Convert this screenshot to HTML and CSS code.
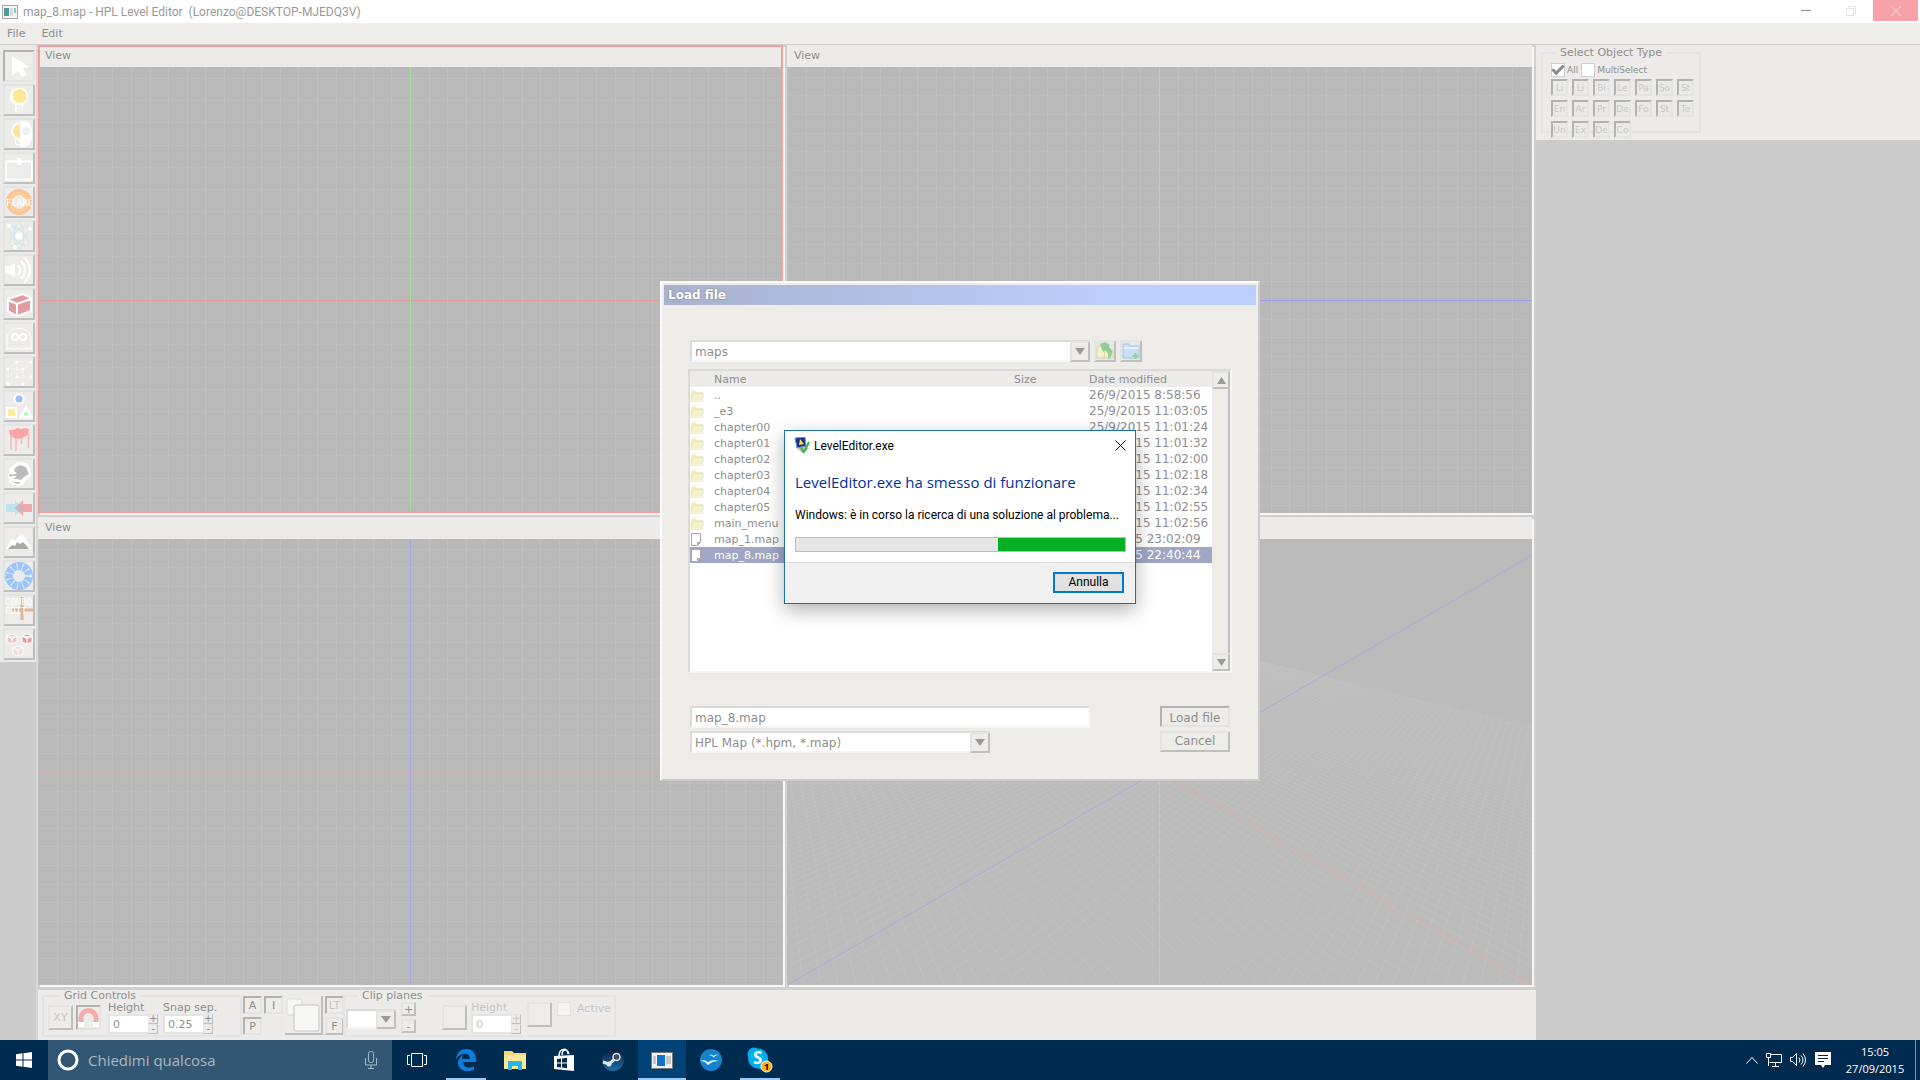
FILE: index.html
```html
<!DOCTYPE html>
<html lang="it">
<head>
<meta charset="utf-8">
<title>map_8.map - HPL Level Editor</title>
<link rel="stylesheet" href="styles.css">
</head>
<body>
<header class="titlebar">
  <svg class="app-icon" width="16" height="14" viewBox="0 0 16 14"><rect x=".5" y=".5" width="15" height="13" fill="#f4f4f4" stroke="#a9a9a9"/><rect x="2" y="3" width="5" height="8" fill="#4f9a95"/><path d="M2 3h3l-3 5z" fill="#5f8fc0"/><rect x="8" y="3" width="3" height="8" fill="#d9dbe6"/><rect x="12" y="3" width="2" height="5" fill="#8ccfae"/></svg>
  <span class="title">map_8.map - HPL Level Editor&nbsp; (Lorenzo@DESKTOP-MJEDQ3V)</span>
  <div class="window-buttons">
    <button aria-label="Riduci a icona"><svg width="10" height="10"><path d="M0 4.500h10" stroke="#8a8a8a"/></svg></button>
    <button aria-label="Ingrandisci"><svg width="10" height="10" fill="none" stroke="#e2e2e2"><path d="M.5 2.500h7v7h-7zM2.500 2.500v-2h7v7h-2"/></svg></button>
    <button class="close" aria-label="Chiudi"><svg width="10" height="10"><path d="M0 0l10 10M10 0L0 10" stroke="#fcdcde"/></svg></button>
  </div>
</header>
<nav class="menubar"><button>File</button><button>Edit</button></nav>

<main class="editor">
  <aside class="toolbar">
    <div class="tools">
      <button class="sunken" aria-label="Select"><svg viewBox="0 0 28 28"><path d="M7 4v20l6-5 4 6 5-2-4-7 6-1z" fill="#fff"/></svg></button>
      <button aria-label="Light"><svg viewBox="0 0 28 28"><path d="M14 1.500a9 9 0 0 0-5 16.500l1 2v5q4 3 8 0v-5l1-2a9 9 0 0 0-5-16.500" fill="#fff"/><circle cx="14.500" cy="10" r="7" fill="#ffe694"/><path d="M12 20l5 5m-5-2l3 3m-1-7l3 3" stroke="#ddd"/></svg></button>
      <button aria-label="Billboard light"><svg viewBox="0 0 28 28"><path d="M14 2a9 9 0 0 0-4 16v6q2 2 5 1z" fill="#fff"/><path d="M15 4a7 7 0 0 0 0 14z" fill="#ffe694"/><path d="M15 1h5c10 1 10 26-1 26h-4z" fill="#fff"/><circle cx="21" cy="11" r="4" fill="#f0f0ee"/><path d="M11 20l3 4" stroke="#ccc"/></svg></button>
      <button aria-label="Area"><svg viewBox="0 0 28 28"><path d="M1 7.500h26v18H1z" fill="none" stroke="#fff" stroke-width="2"/><path d="M12 4h4v7h-4z" fill="#fff"/></svg></button>
      <button aria-label="Flare"><svg viewBox="0 0 28 28"><circle cx="14" cy="14" r="10" fill="none" stroke="#fbc396" stroke-width="6"/><circle cx="14" cy="14" r="9" fill="none" stroke="#fdd09a" stroke-width="2"/><text x="1" y="18" class="icon-text" font-size="9">FLARE</text></svg></button>
      <button aria-label="Particle"><svg viewBox="0 0 28 28" fill="none" stroke="#cfe8ee"><ellipse cx="14" cy="14" rx="5" ry="13"/><ellipse cx="14" cy="14" rx="5" ry="13" transform="rotate(45 14 14)"/><ellipse cx="14" cy="14" rx="5" ry="13" transform="rotate(-45 14 14)"/><g fill="#fff" stroke="none"><circle cx="14" cy="14" r="3.500"/><circle cx="4" cy="4" r="2"/><circle cx="25" cy="7" r="2"/><circle cx="10" cy="25" r="2"/></g></svg></button>
      <button aria-label="Sound"><svg viewBox="0 0 28 28" fill="none" stroke="#fff" stroke-width="2"><path d="M0 10h5l5-3v14l-5-3H0z" fill="#fff" stroke="none"/><path d="M13 9q4 5 0 10M16 5q8 9 0 18M19 1q12 13 0 26"/></svg></button>
      <button aria-label="Static object"><svg viewBox="0 0 28 28"><path d="M3 9L18 4l8 4v13l-14 5-9-5z" fill="#e29ca0" stroke="#fff" stroke-width="2"/><path d="M3 10l9 4 14-5M12 14v12" stroke="#fff" stroke-width="2" fill="none"/></svg></button>
      <button aria-label="Entity"><svg viewBox="0 0 28 28" fill="none" stroke="#fff"><path d="M2 26V15c0-14 24-14 24 0v11q-2-4-4 0-2-4-4 0-2-4-4 0-2-4-4 0-2-4-4 0-2-4-4 0z"/><g stroke-width="2"><circle cx="10" cy="13" r="3"/><circle cx="18" cy="13" r="3"/></g></svg></button>
      <button aria-label="Area box"><svg viewBox="0 0 28 28" fill="none" stroke="#fff"><path d="M3 11h15v16H3zM12 4h15v15H12zM3 11l9-7M18 11l9-7M3 27l9-8M18 27l9-8" stroke-dasharray="1 2"/><g fill="#fff" stroke="none"><circle cx="3" cy="11" r="1.500"/><circle cx="18" cy="11" r="1.500"/><circle cx="12" cy="4" r="1.500"/><circle cx="26" cy="4" r="1.500"/><circle cx="3" cy="26" r="1.500"/><circle cx="18" cy="26" r="1.500"/><circle cx="12" cy="19" r="1.500"/><circle cx="26" cy="19" r="1.500"/></g></svg></button>
      <button aria-label="Primitive"><svg viewBox="0 0 28 28" stroke="#fff" stroke-width="2"><circle cx="14" cy="7" r="4.500" fill="#9cc0fa"/><path d="M2 16h9v9H2z" fill="#ffec9c"/><path d="M21 16l5 9H16z" fill="#9f9" stroke-width="3"/></svg></button>
      <button aria-label="Decal"><svg viewBox="0 0 28 28"><path d="M4 4l5 0 3-2 4 1 4-1 4 1-1 6-4 2-5 2-5-1-4-3z" fill="#fba6a6"/><path d="M6 10v14M11 12v13M16.500 12v6M23.500 8v14" stroke="#f6b8b8" stroke-width="1.500"/></svg></button>
      <button aria-label="Fog"><svg viewBox="0 0 28 28"><path d="M9 5l4-3 8 1 4 5 1 8-5 4-3 5-6 1-7-3-2-8 2-3-1-3z" fill="#fff"/><path d="M10 8l5-3 6 2 3 7-5 3-3 3-4-1-4 0 4-3-5 0 5-3-3-2zM5 19l4 3 6 0-1 2-5-1z" fill="#bcbcbc"/><path d="M4 14l6 1-5 2z" fill="#bcbcbc"/></svg></button>
      <button aria-label="Mirror"><svg viewBox="0 0 28 28"><path d="M1 10h9V6l8 8-8 8v-4H1z" fill="#c0e4ee"/><path d="M27 10h-9V6l-8 8 8 8v-4h9z" fill="#eea8ac"/><path d="M14 10l4 4-4 4-4-4z" fill="#c5b9c4"/></svg></button>
      <button aria-label="Terrain"><svg viewBox="0 0 28 28"><path d="M1 21l6-10 3 2 7-8 10 16z" fill="#fff"/><path d="M3 21l4-4 3 1 2-4 3 2 3-2 3 3 3 4z" fill="#aaa"/></svg></button>
      <button aria-label="Rotate"><svg viewBox="0 0 28 28"><circle cx="14" cy="14" r="10" fill="none" stroke="#9cc3fb" stroke-width="8"/><circle cx="14" cy="14" r="9" fill="none" stroke="#dfeaf6" stroke-width="8" stroke-dasharray="1 4"/></svg></button>
      <button aria-label="Combo edit"><svg viewBox="0 0 28 28"><path d="M17 1v23M6 14h22" stroke="#dbb497" stroke-width="3"/><text x="0" y="9" class="icon-text" font-size="9">COMBO</text><text x="0" y="18" class="icon-text" font-size="9">EDIT</text></svg></button>
      <button aria-label="Groups"><svg viewBox="0 0 28 28" stroke="#fff"><path d="M2 6l5-2 5 2v6l-5 2-5-2zM2 6l5 3 5-3M7 9v5" fill="#efc4c8"/><path d="M17 6l5-2 5 2v6l-5 2-5-2zM17 6l5 3 5-3M22 9v5" fill="#e29ca0"/><path d="M8 18l5-2 5 2v6l-5 2-5-2zM8 18l5 3 5-3M13 21v5" fill="#f1dcdd"/></svg></button>
    </div>
  </aside>

  <div class="center">
    <div class="views">
      <section class="view active"><h2>View</h2><svg data-view="flat" data-stepy="22.2" data-h="#e09a9a" data-v="#9fe398"></svg></section>
      <section class="view"><h2>View</h2><svg data-view="flat" data-stepy="18.6" data-h="#9c9cf5" data-v="#9fe398"></svg></section>
      <section class="view"><h2>View</h2><svg data-view="flat" data-stepy="18.6" data-h="#ceaeae" data-v="#a6a6ea"></svg></section>
      <section class="view scene"><h2>View</h2><svg data-view="perspective"></svg></section>
    </div>
    <div class="controls">
      <fieldset class="grid-controls"><legend>Grid Controls</legend>
        <button class="tile off">XY</button>
        <button class="tile sunken" aria-label="Snap"><svg width="21" height="21" viewBox="0 0 21 21"><path d="M3 18v-7a7 7 0 0 1 15 0v7" fill="none" stroke="#f4adad" stroke-width="5"/><path d="M0 15h6v5H0zM15 15h6v5h-6z" fill="#fff"/></svg></button>
        <div class="field"><label for="gh">Height</label><div class="spin"><input id="gh" value="0"><span><button>+</button><button>-</button></span></div></div>
        <div class="field snap"><label for="gs">Snap sep.</label><div class="spin"><input id="gs" value="0.25"><span><button>+</button><button>-</button></span></div></div>
      </fieldset>
      <div class="modes">
        <button class="sunken">A</button><button class="sunken">I</button>
        <button class="layers" aria-label="Layers"><svg width="36" height="36" viewBox="0 0 36 36"><g fill="#f6f6f5" stroke="#dadada"><rect x="2" y="2" width="15" height="16" rx="1"/><rect x="9" y="8" width="25" height="26" rx="2" stroke="#c6c6c6"/></g></svg></button>
        <button class="sunken off">LT</button>
        <button class="sunken second">P</button><button>F</button>
      </div>
      <fieldset class="clip"><legend>Clip planes</legend>
        <div class="select-box mini"><input aria-label="Clip plane"><button aria-label="Open"><svg width="10" height="7"><path d="M0 0h10L5 7z" fill="#999"/></svg></button></div>
        <div class="plusminus"><button>+</button><button>-</button></div>
        <button class="tile plane" aria-label="Plane"></button>
        <div class="field off"><label for="ch">Height</label><div class="spin"><input id="ch" value="0"><span><button>+</button><button>-</button></span></div></div>
        <button class="tile flip" aria-label="Flip"></button>
        <label class="check off"><input type="checkbox">Active</label>
      </fieldset>
    </div>
  </div>

  <aside class="side">
    <div class="side-panel">
      <fieldset><legend>Select Object Type</legend>
        <div class="checks"><label class="check"><input type="checkbox" checked>All</label><label class="check multi"><input type="checkbox">MultiSelect</label></div>
        <div class="types"><button>Li</button><button>Li</button><button>Bi</button><button>Le</button><button>Pa</button><button>So</button><button>St</button><button>En</button><button>Ar</button><button>Pr</button><button>De</button><button>Fo</button><button>St</button><button>Te</button><button>Un</button><button>Ex</button><button>De</button><button>Co</button></div>
      </fieldset>
    </div>
  </aside>
</main>

<section class="load-dialog" role="dialog" aria-label="Load file">
  <h2>Load file</h2>
  <div class="load-body">
    <div class="path-row">
      <div class="select-box path"><input aria-label="Folder" value="maps"><button aria-label="Open"><svg width="10" height="7"><path d="M0 0h10L5 7z" fill="#999"/></svg></button></div>
      <button class="icon-button" aria-label="Up"><svg width="18" height="18" viewBox="0 0 18 18"><path d="M1 4h4l1 1h3v11H1z" fill="#f5f0cb" stroke="#d8d2a4"/><path d="M9 8h8v8H8z" fill="#f5f0cb" stroke="#d8d2a4"/><path d="M4 2l5-2 5 3-1 2q5 4 2 10l-3 2q1-6-3-9L7 10z" fill="#8fce96"/></svg></button>
      <button class="icon-button" aria-label="New folder"><svg width="18" height="18" viewBox="0 0 18 18"><path d="M1 2h6l1 2h9v12H1z" fill="#c9dff5" stroke="#a8c4e4"/><path d="M2 6h15" stroke="#fff"/><path d="M13.500 11v6M10.500 14h6" stroke="#96d09b" stroke-width="2"/></svg></button>
    </div>
    <div class="list">
      <table>
        <colgroup><col class="c-icon"><col class="c-name"><col class="c-size"><col></colgroup>
        <thead><tr><th></th><th>Name</th><th>Size</th><th>Date modified</th></tr></thead>
        <tbody id="files"></tbody>
      </table>
      <div class="scrollbar"><button aria-label="Scroll up"><svg width="9" height="7"><path d="M0 7h9L4.500 0z" fill="#999"/></svg></button><button aria-label="Scroll down"><svg width="9" height="7"><path d="M0 0h9L4.500 7z" fill="#999"/></svg></button></div>
    </div>
    <div class="bottom-row">
      <div class="inputs">
        <input class="file-name" aria-label="File name" value="map_8.map">
        <div class="select-box filter"><input aria-label="File type" value="HPL Map (*.hpm, *.map)"><button aria-label="Open"><svg width="10" height="7"><path d="M0 0h10L5 7z" fill="#999"/></svg></button></div>
      </div>
      <div class="actions"><button class="sunken">Load file</button><button>Cancel</button></div>
    </div>
  </div>
</section>

<section class="crash" role="dialog" aria-label="LevelEditor.exe">
  <div class="crash-title"><svg width="16" height="17" viewBox="0 0 16 17"><path d="M3 11l8-2 4 3-7 4z" fill="#b9c0c6"/><path d="M1 1l10-1 1 9-9 2z" fill="#15309c" stroke="#8593b5"/><path d="M6 2l4 5-5 1z" fill="#f6e32c"/><path d="M7 11l3 4 5-10" fill="none" stroke="#3fb441" stroke-width="2"/></svg><span>LevelEditor.exe</span><button aria-label="Chiudi"><svg width="11" height="11"><path d="M.5 .5l10 10M10.500 .5l-10 10" stroke="#000"/></svg></button></div>
  <h3>LevelEditor.exe ha smesso di funzionare</h3>
  <p>Windows: è in corso la ricerca di una soluzione al problema...</p>
  <div class="progress"><div></div></div>
  <footer><button>Annulla</button></footer>
</section>

<footer class="taskbar">
  <button class="start" aria-label="Start"><svg width="16" height="16" viewBox="0 0 16 16" fill="#fff"><path d="M0 2.200L6.500 1.300v6.200H0zM7.500 1.200L16 0v7.500H7.500zM0 8.500h6.500v6.200L0 13.800zM7.500 8.500H16V16l-8.500-1.200z"/></svg></button>
  <div class="search"><svg width="22" height="22"><circle cx="11" cy="11" r="9" fill="none" stroke="#fff" stroke-width="3"/></svg><input aria-label="Cerca" placeholder="Chiedimi qualcosa"><svg width="12" height="18" fill="none" stroke="#a9b8c5"><rect x="3.500" y=".5" width="5" height="11" rx="2"/><path d="M.5 7v7h11V7M6 14v3M3 17.500h6"/></svg></div>
  <div class="apps">
    <button aria-label="Visualizzazione attività"><svg width="20" height="14" fill="none" stroke="#fff"><path d="M4.500 .5h11v13h-11zM3 2.500H.5v9H3M17 2.500h2.500v9H17"/></svg></button>
    <button class="running" aria-label="Edge"><svg width="20" height="22" viewBox="0 0 20 22"><path d="M0 10C1 3 5 0 10.500 0 17 0 20 5 20 10v3H7c0 6 7 7 11 4v4C10 24 2 21 2 14c0-4 3-7 6-8-2 1-2 3-2 4h8c0-7-9-7-14 0" fill="#0c7fdd"/></svg></button>
    <button aria-label="Esplora file"><svg width="22" height="19" viewBox="0 0 22 19"><path d="M0 0h8l2 2h12v16H0z" fill="#f7d76f"/><path d="M0 4h22v14H0z" fill="#fde79a"/><path d="M4 19v-9h14v9h-4v-4H8v4z" fill="#28b7e5"/></svg></button>
    <button aria-label="Store"><svg width="22" height="24" viewBox="0 0 22 24"><path d="M1 8l20-1v16L1 21z" fill="#fff"/><path d="M6 8c0-8 9-9 9-2M9 7c0-6 5-7 7-1" fill="none" stroke="#fff" stroke-width="1.500"/><path d="M4 11l4-.5v4H4zM9 10.400l5-.6v4.700H9zM4 15.500h4v4l-4-.5zM9 15.500h5v4.700l-5-.6z" fill="#002b50"/></svg></button>
    <button aria-label="Steam"><svg width="22" height="22" viewBox="0 0 22 22"><defs><linearGradient id="st" x1="0" y1="0" x2="0" y2="1"><stop offset="0" stop-color="#0d1b3c"/><stop offset="1" stop-color="#1a70a5"/></linearGradient></defs><circle cx="11" cy="11" r="11" fill="url(#st)"/><path d="M1 13l6 2 7-6" stroke="#dfe5ea" stroke-width="3" fill="none"/><circle cx="14.500" cy="8" r="3.500" fill="#3b4a63" stroke="#dfe5ea" stroke-width="1.500"/><circle cx="7" cy="15" r="2.500" fill="#dfe5ea"/></svg></button>
    <button class="running current" aria-label="HPL Level Editor"><svg width="22" height="17" viewBox="0 0 22 17"><path d="M.5 .5h21v16H.5z" fill="#f4f4f4" stroke="#7b7b7b"/><path d="M6 3h8v11H6z" fill="#1172d3"/><path d="M2 5h3M2 7h3M2 9h3M2 11h3M15 5h5M15 7h5M15 9h5M15 11h5" stroke="#999"/></svg></button>
    <button aria-label="OpenOffice"><svg width="22" height="22" viewBox="0 0 22 22"><circle cx="11" cy="11" r="11" fill="#1484cf"/><path d="M9 6q3-1 4.500 1 2-2 5-1-3.500 0-4.500 2.500-2-2.500-5-2.500M0 12q5-2 8 1.500 4-3.500 11-1.500-7 0-11 4-3-4-8-4z" fill="#fff"/></svg></button>
    <button class="running" aria-label="Skype"><svg width="26" height="26" viewBox="0 0 26 26"><circle cx="7" cy="7" r="6.500" fill="#00aff0"/><circle cx="15" cy="16" r="6.500" fill="#00aff0"/><circle cx="11" cy="11.500" r="10" fill="#00aff0"/><text x="6" y="17" font-size="17" class="skype">S</text><circle cx="19.500" cy="19.500" r="5.500" fill="#fdb01c" stroke="#fff"/><text x="17" y="23" font-size="9" class="badge">1</text></svg></button>
  </div>
  <div class="tray">
    <svg width="12" height="7" fill="none" stroke="#fff"><path d="M.5 6.500l5.500-6 5.500 6"/></svg>
    <svg width="16" height="14" fill="none" stroke="#fff"><path d="M4 1.500h11.500v8H3.500M9.500 10v3M6 13.500h7M.5 .5h4v4h-4zM2.500 5v8"/></svg>
    <svg width="17" height="14" fill="none" stroke="#fff"><path d="M.5 4.500h2l4-4v12l-4-4h-2zM9 4.500q2 2.500 0 5M11 2.500q4 4.500 0 9M13 .5q5 6.500 0 13"/></svg>
    <svg width="16" height="16"><path d="M0 0h16v13h-6l-2 3-2-3H0z" fill="#fff"/><path d="M3 3.500h10M3 6.500h10M3 9.500h6" stroke="#002b50"/></svg>
    <div class="clock">15:05<br>27/09/2015</div>
  </div>
</footer>
<script src="app.js"></script>
</body>
</html>
```
FILE: styles.css
```css
* { box-sizing: border-box; }
:root {
  --face: #edece8;
  --panel: #ecebe9;
  --text: #8e8e8e;
  --light: #e4e4e4;
  --dark: #bfbfbf;
  --void: #cccccc;
  --bar: #002b50;
}
body {
  margin: 0;
  height: 100vh;
  display: grid;
  grid-template-rows: 23px 22px minmax(0, 1fr) 40px;
  font: 11px/14px "DejaVu Sans", sans-serif;
  color: var(--text);
  background: var(--void);
  overflow: hidden;
}
button, input { font: inherit; color: inherit; margin: 0; padding: 0; }
button { border: 0; background: none; }
h2, h3, p { margin: 0; font: inherit; }
fieldset { margin: 0; min-width: 0; }
svg { display: block; flex: none; }
.icon-text { font-family: "DejaVu Sans Mono", monospace; fill: #fff; }

/* title bar and menu */
.titlebar { display: flex; align-items: center; background: #fff; padding-left: 2px; }
.title { flex: 1; padding-left: 5px; font: 12px/16px Roboto, sans-serif; color: #999; }
.window-buttons { display: flex; align-self: flex-start; padding-right: 2px; }
.window-buttons button { width: 45px; height: 21px; display: grid; place-items: center; }
.window-buttons .close { background: #f7a1a8; }
.menubar { display: flex; gap: 16px; padding-left: 7px; background: #eeede9; border-bottom: 1px solid #cfcfcf; }

/* editor frame */
.editor { display: grid; grid-template-columns: 38px minmax(0, 1fr) 384px; min-height: 0; }
.toolbar { border-right: 2px solid #d6d8d8; }
.tools { display: grid; gap: 2px; padding: 5px 0 2px 3px; background: #eaeae9; }
.tools button { width: 32px; height: 32px; }
.tools button, .tile, .modes button, .plusminus button, .icon-button, .actions button, .scrollbar button, .select-box button {
  border: 2px solid;
  border-color: var(--light) var(--dark) var(--dark) var(--light);
  background: var(--face);
}
.tools .sunken, .tile.sunken, .modes .sunken, .actions .sunken, .types button {
  border-color: #b2b2b2 var(--light) var(--light) #b2b2b2;
}

.center { display: grid; grid-template-rows: minmax(0, 1fr) 50px; min-height: 0; }
.views {
  display: grid;
  grid-template: repeat(2, minmax(0, 1fr)) / repeat(2, minmax(0, 1fr));
  gap: 4px;
  padding: 0 4px 5px 0;
  background: #d0d0d0;
}
.view { display: grid; grid-template-rows: 22px minmax(0, 1fr); box-shadow: 2px 2px 0 #f7f7f7; background: #b9b9b9; }
.view.scene { background: #bbbbbb; }
.view.active { outline: 2px solid #fb9b9b; outline-offset: -2px; }
.view h2 { padding: 4px 7px; background: var(--panel); }
.view svg { width: 100%; height: 100%; }

/* bottom controls */
.controls { display: flex; align-items: flex-start; background: var(--panel); }
.controls fieldset { display: flex; height: 47px; padding: 0; border: 2px solid #e4e4e4; }
.controls legend, .side legend { height: 12px; line-height: 12px; padding: 0 4px; }
.controls legend { margin-left: 13px; }
.controls .grid-controls { width: 200px; margin-left: 4px; gap: 3px; padding-left: 4px; }
.controls .grid-controls legend { margin-left: 12px; }
.tile { width: 25px; height: 25px; margin-top: 3px; display: grid; place-items: center; }
.off { color: #c6c6c6; }
.tile svg { width: 21px; height: 21px; }
.grid-controls .field { margin-left: 4px; }
.grid-controls .snap { margin-left: 2px; }
.field label { display: block; line-height: 12px; white-space: nowrap; }
.field { width: 50px; }
.spin { display: flex; height: 20px; }
.spin input { width: 40px; border: 2px solid var(--light); border-right: 0; background: #fff; padding: 2px 0 0 3px; }
.spin span { display: grid; width: 10px; }
.spin button { border: 1px solid; border-color: var(--light) var(--dark) var(--dark) var(--light); font-size: 10px; line-height: 8px; height: 10px; }
.modes { display: grid; grid-template: 18px 18px / 19px 19px 38px 19px; gap: 3px 2px; width: 101px; padding: 6px 0 0 1px; }
.modes .layers { grid-row: span 2; height: 39px; border-width: 0 2px 2px 0; }
.modes .second { grid-column: 1; }
.modes .second + button { grid-column: 4; }
.modes button { line-height: 16px; }
.clip { width: 273px; }
.clip .mini { width: 50px; height: 20px; margin: 7px 0 0 1px; }
.plusminus { display: grid; gap: 3px; align-content: start; margin-left: 5px; }
.plusminus button { width: 15px; height: 14px; line-height: 9px; }
.plane { margin-left: 26px; }
.clip .field { margin-left: 4px; }
.flip { margin: 0 0 0 6px; }
.check { display: flex; align-items: center; gap: 6px; height: 14px; }
.clip .check { margin-left: 5px; }
.check input { appearance: none; width: 14px; height: 14px; background: #fff; border: 1px solid #cfcfcf; }
.off.check input { border-color: #e2e2e2; background: #f3f3f3; }
.check input:checked { display: grid; place-items: center; }
.check input:checked::after { content: ""; width: 9px; height: 4px; border: solid #8c8c8c; border-width: 0 0 3px 3px; transform: rotate(-45deg); margin-top: -3px; }

/* object types */
.side-panel { height: 95px; background: var(--panel); padding: 2px 0 0 5px; }
.side fieldset { width: 160px; height: 86px; padding: 0 0 0 8px; border: 2px solid #e4e4e4; }
.side legend { margin-left: 5px; }
.checks { display: flex; gap: 3px; padding-top: 4px; font-size: 9px; }
.checks .check { gap: 2px; }
.types { display: grid; grid-template-columns: repeat(7, 17px); gap: 4px; padding-top: 2px; }
.types button { height: 17px; border: 2px solid; border-color: #b2b2b2 var(--light) var(--light) #b2b2b2; font-size: 9px; line-height: 14px; color: #c8c8c8; background: #ebeae6; }

/* file dialog */
.load-dialog {
  position: absolute;
  top: 281px;
  left: 0;
  right: 0;
  width: 600px;
  height: 500px;
  margin: 0 auto;
  padding: 2px;
  background: var(--face);
  border: 2px solid;
  border-color: #fcfcfc #cbcbcb #cbcbcb #fcfcfc;
}
.load-dialog h2 {
  height: 20px;
  line-height: 20px;
  padding-left: 4px;
  font-size: 12px;
  font-weight: bold;
  color: #fff;
  text-shadow: 0 0 2px #777;
  background: linear-gradient(90deg, #a8b2cc, #bccefe 75%);
}
.load-body { padding: 35px 24px 0; }
.path-row { display: flex; gap: 4px; padding-left: 2px; }
.path-row .icon-button { width: 22px; height: 22px; display: grid; place-items: center; background: #e4e8e6; }
.select-box { display: flex; height: 22px; border: 2px solid; border-color: #dadada #f6f6f6 #f6f6f6 #dadada; border-right: 0; background: #fff; }
.select-box input { flex: 1; min-width: 0; border: 0; background: none; padding: 2px 0 0 3px; outline: 0; }
.select-box button { width: 20px; margin: -1px 0 -2px; display: grid; place-items: center; }
.path { width: 400px; font-size: 12px; }
.list { display: flex; width: 544px; height: 304px; margin-top: 7px; border: 2px solid; border-color: #dadada #f6f6f6 #f6f6f6 #dadada; background: #fff; }
table { flex: 1; align-self: flex-start; table-layout: fixed; border-collapse: collapse; }
.c-icon { width: 24px; }
.c-name { width: 300px; }
.c-size { width: 75px; }
th { text-align: left; font-weight: normal; background: #ecebe9; }
th, td { height: 16px; padding: 1px 0 0; line-height: 15px; white-space: nowrap; }
td:last-child { font-size: 12px; }
tr.selected { background: #9fa7c5; color: #fff; }
.scrollbar { width: 18px; display: flex; flex-direction: column; justify-content: space-between; background: var(--face); border-right: 2px solid var(--dark); }
.scrollbar button { height: 18px; width: 18px; display: grid; place-items: center; }
.bottom-row { display: flex; justify-content: space-between; padding: 33px 2px 0; font-size: 12px; }
.inputs, .actions { display: flex; flex-direction: column; gap: 3px; }
.actions { gap: 4px; }
.file-name { width: 400px; height: 22px; padding: 2px 0 0 3px; border: 2px solid; border-color: #dadada #f6f6f6 #f6f6f6 #dadada; background: #fff; }
.filter { width: 300px; }
.actions button { width: 70px; height: 21px; line-height: 17px; }
.actions .sunken { padding-top: 2px; }

/* crash dialog */
.crash {
  position: absolute;
  top: 430px;
  left: 0;
  right: 0;
  width: 352px;
  margin: 0 auto;
  background: #fff;
  border: 1px solid #1a70b0;
  box-shadow: 0 6px 18px rgba(0, 0, 0, .3);
  font: 12px/16px Roboto, sans-serif;
  color: #000;
}
.crash-title { display: flex; align-items: center; gap: 4px; height: 29px; padding: 0 9px; }
.crash-title span { flex: 1; }
.crash h3 { padding: 11px 10px 0; font: 15px/22px "Open Sans", sans-serif; color: #003399; white-space: nowrap; }
.crash p { padding: 14px 10px 0; white-space: nowrap; }
.progress { height: 15px; margin: 14px 9px 10px 10px; border: 1px solid #bcbcbc; background: #e6e6e6; display: flex; justify-content: flex-end; }
.progress div { width: 127px; background: #06b025; }
.crash footer { height: 41px; padding: 9px 11px; background: #f0f0f0; border-top: 1px solid #dfdfdf; text-align: right; }
.crash footer button { width: 71px; height: 21px; border: 2px solid #0078d7; background: #e1e1e1; line-height: 17px; }

/* taskbar */
.taskbar { display: flex; background: var(--bar); color: #fff; font-family: "Open Sans", sans-serif; }
.start { width: 48px; display: grid; place-items: center; }
.search { display: flex; align-items: center; width: 344px; padding: 0 15px 0 9px; background: #335672; }
.search input { flex: 1; min-width: 0; padding-left: 9px; border: 0; background: none; font-size: 15px; }
.search input::placeholder { color: #a9b8c5; opacity: 1; }
.apps { display: flex; flex: 1; gap: 1px; padding-left: 1px; }
.apps button { width: 48px; display: grid; place-items: center; }
.apps .running { background: linear-gradient(#99c9f5, #99c9f5) center bottom / 40px 2px no-repeat; }
.apps .current { background: #004275 linear-gradient(#99c9f5, #99c9f5) center bottom / 48px 2px no-repeat; }
.skype { font-family: "Open Sans", sans-serif; font-weight: bold; fill: #fff; }
.badge { font-family: "Open Sans", sans-serif; font-weight: bold; fill: #000; }
.tray { display: flex; align-items: center; gap: 8px; margin-right: 4px; border-right: 1px solid #7d93a6; }
.clock { width: 72px; margin-right: 4px; text-align: center; font-size: 11px; line-height: 17px; }
```
FILE: app.js
```js
const FOLDER = '<svg width="14" height="12"><path d="M.5 2.500l1-2h4l1 1.500h7v2h-10l-1 7h-2z" fill="#f0ebc4"/><path d="M3 4h11l-2 8H1z" fill="#f6f2cf" stroke="#e2dcb4" stroke-width=".5"/></svg>';
const FILE = '<svg width="12" height="13"><path d="M1.500 .5h9v9l-3 3h-6z" fill="#fff" stroke="#a8a8a8"/><path d="M7 12V9h4z" fill="#a8a8a8"/></svg>';
const files = [
  ['..', '26/9/2015 8:58:56'], ['_e3', '25/9/2015 11:03:05'],
  ['chapter00', '25/9/2015 11:01:24'], ['chapter01', '25/9/2015 11:01:32'],
  ['chapter02', '25/9/2015 11:02:00'], ['chapter03', '25/9/2015 11:02:18'],
  ['chapter04', '25/9/2015 11:02:34'], ['chapter05', '25/9/2015 11:02:55'],
  ['main_menu', '25/9/2015 11:02:56'], ['map_1.map', '5/9/2015 23:02:09'],
  ['map_8.map', '5/9/2015 22:40:44']
];
document.getElementById('files').innerHTML = files.map(([name, date]) =>
  `<tr${name === 'map_8.map' ? ' class="selected"' : ''}><td>${name.endsWith('.map') ? FILE : FOLDER}</td><td>${name}</td><td></td><td>${date}</td></tr>`).join('');

const L = -372.5, T = -233, W = 745, H = 446;
const line = (x1, y1, x2, y2, c, o = 1) =>
  `<path d="M${x1.toFixed(1)} ${y1.toFixed(1)}L${x2.toFixed(1)} ${y2.toFixed(1)}" stroke="${c}" stroke-opacity="${o}"/>`;

function flat(d) {
  let s = '';
  for (let i = -20; i <= 20; i++) {
    const x = Math.round(i * 18.6), y = Math.round(i * d.stepy) + .5;
    s += line(x, T, x, T + H, '#c0c0c0') + line(L, y, L + W, y, '#bebebe');
  }
  return s + line(L, .5, L + W, .5, d.h) + line(0, T, 0, T + H, d.v);
}

// Ground plane seen from the (1,1,1) diagonal; distances are in camera distances.
const F = 330, SIN = .577, COS = .816, N = 1.19, CELLS = 60;
function groundLine(a1, b1, a2, b2) {
  const conv = (a, b) => [(a + b) / Math.SQRT2, (a - b) / Math.SQRT2];
  let [p, q] = [conv(a1, b1), conv(a2, b2)];
  const depth = v => 1 + v[1] * COS;
  if (depth(p) < .2 && depth(q) < .2) return '';
  const clip = (near, far) => {
    const t = (.2 - depth(near)) / (depth(far) - depth(near));
    return near.map((n, i) => n + (far[i] - n) * t);
  };
  if (depth(p) < .2) p = clip(p, q);
  if (depth(q) < .2) q = clip(q, p);
  const proj = v => [F * v[0] / depth(v), -F * v[1] * SIN / depth(v)];
  return line(...proj(p), ...proj(q), '#ffffff', .07);
}
function perspective() {
  let s = '';
  for (let i = -CELLS; i <= CELLS; i++) {
    const k = i / CELLS * N;
    s += groundLine(k, -N, k, N) + groundLine(-N, k, N, k);
  }
  return s + line(-372, 213, 373, -217, '#ababe2') + line(0, 0, 372, 213, '#e6a8a8') + line(0, T, 0, T + H, '#9fe398');
}
document.querySelectorAll('[data-view]').forEach(svg => {
  svg.setAttribute('viewBox', `${L} ${T} ${W} ${H}`);
  svg.setAttribute('preserveAspectRatio', 'xMidYMid slice');
  svg.innerHTML = svg.dataset.view === 'flat' ? flat(svg.dataset) : perspective();
});
```
